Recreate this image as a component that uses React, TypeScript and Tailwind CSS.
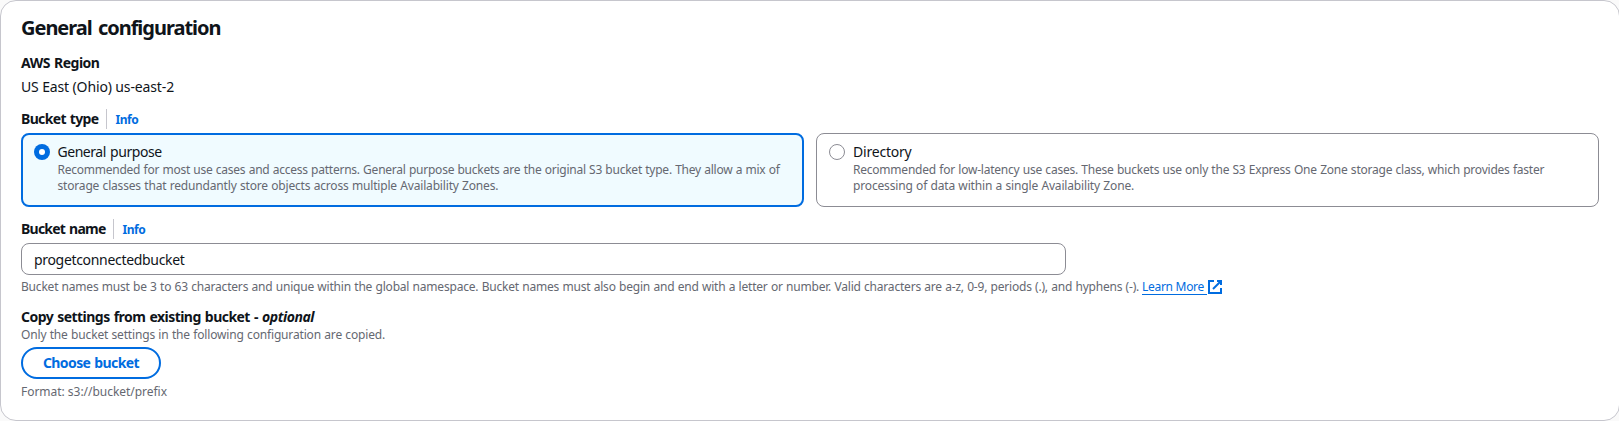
import type { ReactNode } from "react";

function FieldLabel({ children, info }: { children: ReactNode; info: ReactNode }) {
  return (
    <div className="flex h-5 items-center whitespace-nowrap">
      {children}
      <span className="ml-[7px] h-5 w-px bg-[#c6c6cd]" />
      {info}
    </div>
  );
}

function InfoLink() {
  return (
    <a href="#" className="ml-[9px] h-5 pt-px text-xs leading-5 font-bold tracking-[-0.5px] text-[#006ce0]">
      Info
    </a>
  );
}

function ExternalIcon() {
  return (
    <svg className="h-4 w-4 shrink-0" viewBox="0 0 16 16" fill="none" stroke="#006ce0" strokeWidth="2">
      <path d="M10 2h4v4" />
      <path d="m6 10 8-8" />
      <path d="M14 9.05V14H2V2h5" />
    </svg>
  );
}

export default function App() {
  return (
    <div className="h-[421px] w-full overflow-hidden bg-[#fafafa] font-['Noto_Sans',sans-serif] text-[#0f141a]">
      <section className="flex h-[421px] w-[1620px] flex-col rounded-2xl border border-[#c6c6cd] bg-white px-5 pt-[15px]">
        <h2 className="h-6 text-xl leading-6 font-bold tracking-[-1.02px] [word-spacing:2px]">General configuration</h2>

        <div className="mt-[13px] h-5 text-sm leading-5 font-bold tracking-[-0.5px] [word-spacing:1px]">AWS Region</div>
        <div className="mt-1 h-5 text-sm leading-5 tracking-[-0.133px]">US East (Ohio) us-east-2</div>

        <div className="mt-3">
          <FieldLabel info={<InfoLink />}>
            <span className="text-sm leading-5 font-bold tracking-[-0.65px] [word-spacing:1px]">Bucket type</span>
          </FieldLabel>
        </div>

        <div className="mt-1 grid h-[74px] grid-cols-2 gap-3 whitespace-nowrap">
          <label className="flex rounded-lg border-2 border-[#006ce0] bg-[#f0fbff] pt-[7px] pl-[11px]">
            <span className="mt-[2px] flex h-4 w-4 items-center justify-center rounded-full bg-[#006ce0]">
              <span className="h-1.5 w-1.5 rounded-full bg-white" />
            </span>
            <span className="ml-[7.5px] flex flex-col">
              <span className="h-5 text-sm leading-5 tracking-[-0.46px] [word-spacing:1px]">General purpose</span>
              <span className="text-xs leading-4 tracking-[-0.24px] text-[#656871] [word-spacing:0.4px]">
                Recommended for most use cases and access patterns. General purpose buckets are the original S3 bucket type. They allow a mix of
              </span>
              <span className="text-xs leading-4 tracking-[-0.175px] text-[#656871] [word-spacing:0.4px]">
                storage classes that redundantly store objects across multiple Availability Zones.
              </span>
            </span>
          </label>
          <label className="flex rounded-lg border border-[#8c8c94] bg-white pt-2 pl-3">
            <span className="mt-[2px] h-4 w-4 rounded-full border border-[#8c8c94]" />
            <span className="ml-2 flex flex-col">
              <span className="h-5 text-sm leading-5 tracking-[-0.211px]">Directory</span>
              <span className="text-xs leading-4 tracking-[-0.22px] text-[#656871] [word-spacing:0.4px]">
                Recommended for low-latency use cases. These buckets use only the S3 Express One Zone storage class, which provides faster
              </span>
              <span className="text-xs leading-4 tracking-[-0.16px] text-[#656871] [word-spacing:0.4px]">
                processing of data within a single Availability Zone.
              </span>
            </span>
          </label>
        </div>

        <div className="mt-3">
          <FieldLabel info={<InfoLink />}>
            <span className="text-sm leading-5 font-bold tracking-[-0.76px] [word-spacing:1px]">Bucket name</span>
          </FieldLabel>
        </div>
        <input
          className="mt-1 h-8 w-[1045px] shrink-0 rounded-lg border border-[#8c8c94] bg-white px-3 text-sm leading-5 tracking-[-0.32px] outline-none"
          defaultValue="progetconnectedbucket"
        />
        <div className="mt-1 flex h-4 items-center text-xs leading-4 whitespace-nowrap text-[#656871]">
          <span className="w-[1118px] tracking-[-0.2px] [word-spacing:0.4px]">
            Bucket names must be 3 to 63 characters and unique within the global namespace. Bucket names must also begin and end with a letter or number. Valid characters are a-z, 0-9, periods (.), and hyphens (-).
          </span>
          <a href="#" className="ml-[3px] flex h-4 items-center text-[#006ce0]">
            <span className="h-4 w-[65px] border-b border-[#006ce0] tracking-[-0.291px]">Learn More</span>
            <ExternalIcon />
          </a>
        </div>

        <div className="mt-3 h-5 text-sm leading-5 font-bold whitespace-nowrap">
          <span className="tracking-[-0.54px] [word-spacing:1px]">Copy settings from existing bucket - </span>
          <em className="tracking-[-0.446px]">optional</em>
        </div>
        <div className="h-4 text-xs leading-4 tracking-[-0.165px] text-[#656871] [word-spacing:0.4px]">
          Only the bucket settings in the following configuration are copied.
        </div>
        <button className="mt-[4px] flex h-8 w-[140px] shrink-0 items-center justify-center rounded-full border-2 border-[#006ce0] bg-white text-sm leading-5 font-bold tracking-[-0.6px] text-[#006ce0] [word-spacing:1px]">
          Choose bucket
        </button>
        <div className="mt-[5px] h-4 text-xs leading-4 tracking-[-0.03px] text-[#656871]">Format: s3://bucket/prefix</div>
      </section>
    </div>
  );
}
